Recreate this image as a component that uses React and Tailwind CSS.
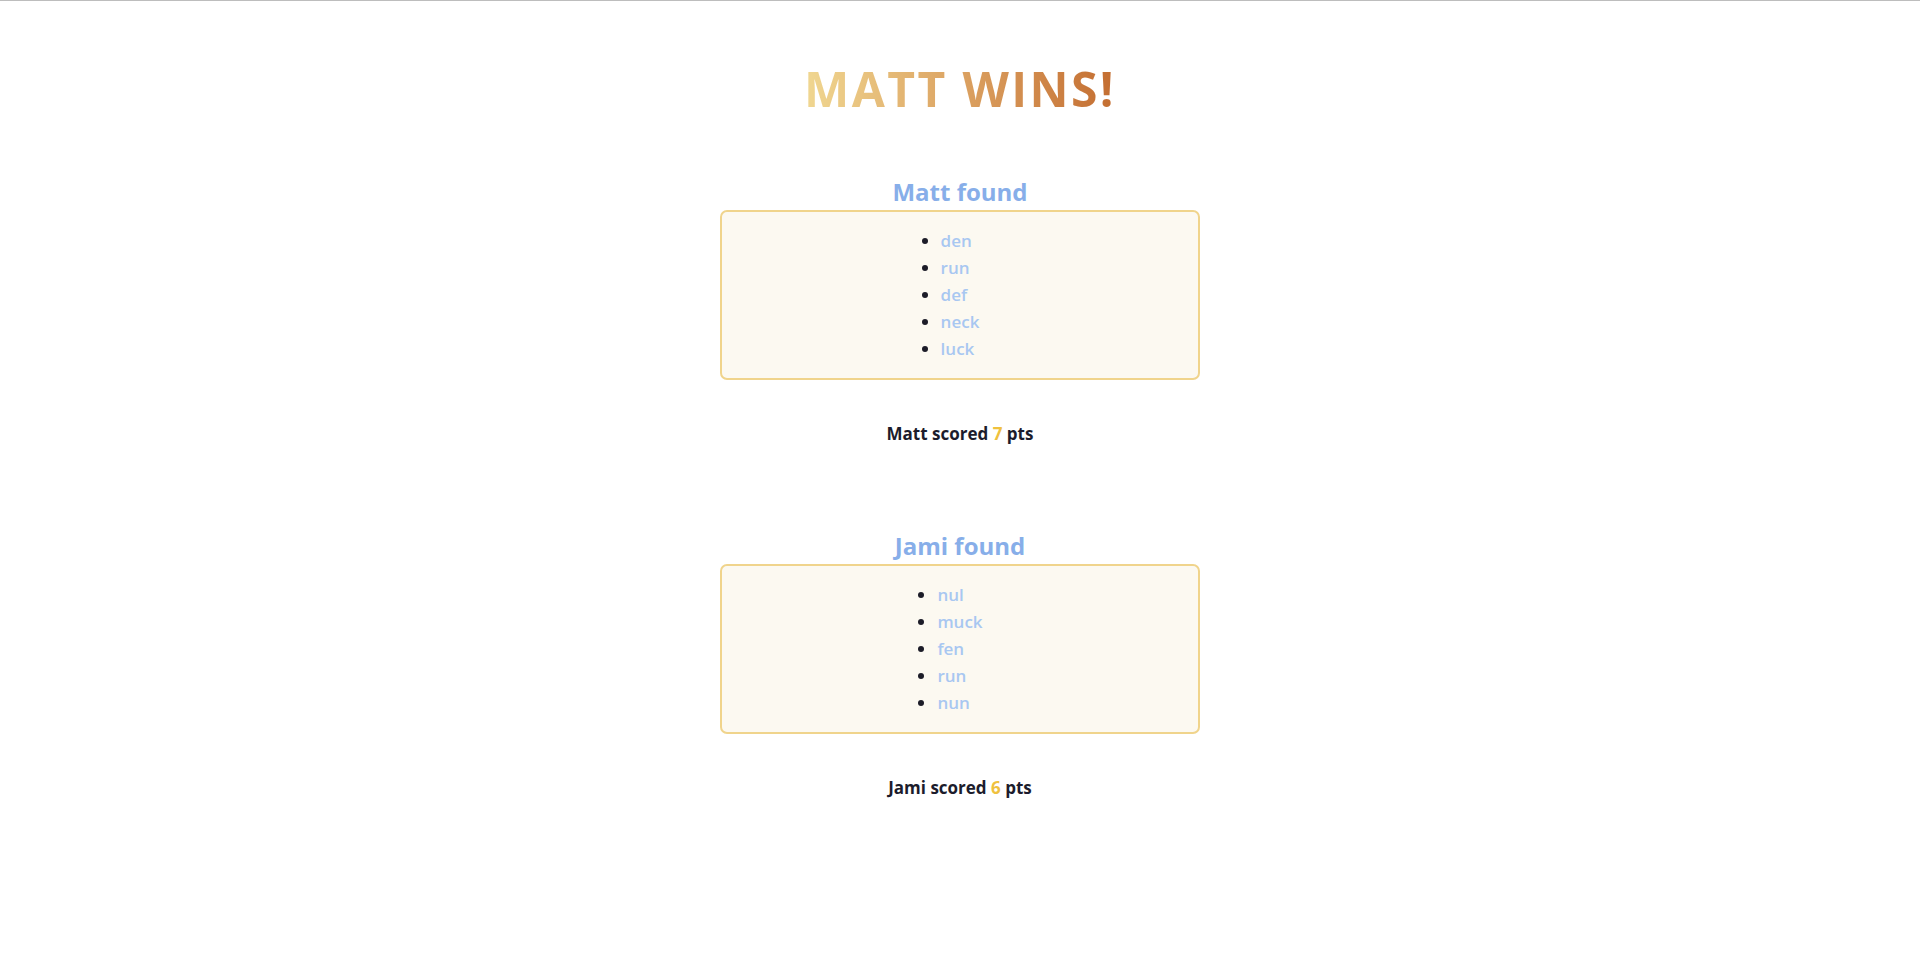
import React from 'react';

const results = [
  { name: 'Matt', words: ['den', 'run', 'def', 'neck', 'luck'], score: 7 },
  { name: 'Jami', words: ['nul', 'muck', 'fen', 'run', 'nun'], score: 6 },
];

const PlayerResult = ({ name, words, score }) => {
  return (
    <div className="flex flex-col items-center">
      <h2 className="text-[24px] leading-[32px] font-bold text-[#87aee9] mb-[2px]">{name} found</h2>
      <div className="w-[480px] bg-[#fcf9f1] border-2 border-[#f0d48c] rounded-[7px] pt-[15px] pb-[16px]">
        <ul className="list-disc w-fit mx-auto text-left">
          {words.map((word, i) => (
            <li key={i} className="text-[17px] leading-[27px] font-semibold text-[#a8c7f1] marker:text-[#1c1c28]">
              {word}
            </li>
          ))}
        </ul>
      </div>
      <p className="mt-[42px] text-[17px] leading-[24px] font-bold text-[#1c1c2c]">
        {name} scored <span className="text-[#efc13e]">{score}</span> pts
      </p>
    </div>
  );
};

export default function App() {
  return (
    <div className="min-h-screen bg-white border-t border-[#bdbdbd] font-['Open_Sans',sans-serif] text-center">
      <h1 className="mt-[64px] w-fit mx-auto text-[48px] leading-[48px] font-bold tracking-[2.4px] bg-gradient-to-r from-[#f0d791] to-[#c36d30] bg-clip-text text-transparent">
        MATT WINS!
      </h1>
      <div className="mt-[63px] flex flex-col gap-[84px]">
        {results.map((r) => (
          <PlayerResult key={r.name} {...r} />
        ))}
      </div>
    </div>
  );
}
